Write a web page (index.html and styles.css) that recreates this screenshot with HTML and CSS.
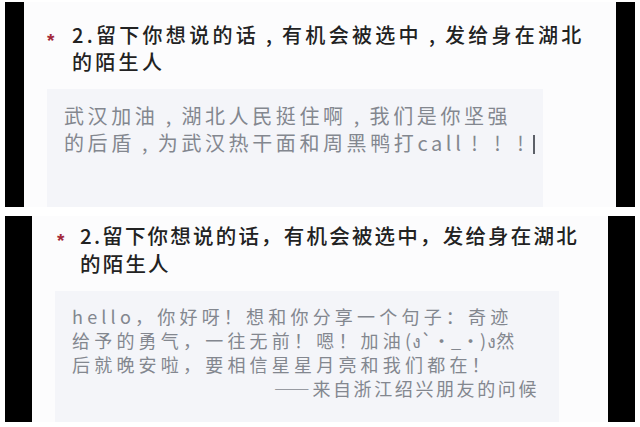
FILE: index.html
```html
<!DOCTYPE html>
<html lang="zh-CN">
<head>
<meta charset="utf-8">
<link rel="stylesheet" href="styles.css">
</head>
<body>
<div class="page">
  <section class="panel panel-top">
    <div class="bar bar-top"></div>
    <div class="content content-top">
      <div class="question q-top">
        <span class="star">*</span>
        <div class="title title-top">
          <div class="tl">2.留下你想说的话<span class="p">,</span>有机会被选中<span class="p">,</span>发给身在湖北</div>
          <div class="tl">的陌生人</div>
        </div>
      </div>
      <div class="box box-top">
        <div class="bl">武汉加油<span class="p">,</span>湖北人民挺住啊<span class="p">,</span>我们是你坚强</div>
        <div class="bl">的后盾<span class="p">,</span>为武汉热干面和周黑鸭打call<span class="p">!</span><span class="p">!</span><span class="p">!</span><span class="caret"></span></div>
      </div>
    </div>
    <div class="bar bar-top"></div>
  </section>
  <section class="panel panel-bottom">
    <div class="bar bar-bottom"></div>
    <div class="content content-bottom">
      <div class="question q-bottom">
        <span class="star">*</span>
        <div class="title title-bottom">
          <div class="tl">2.留下你想说的话，有机会被选中，发给身在湖北</div>
          <div class="tl">的陌生人</div>
        </div>
      </div>
      <div class="box box-bottom">
        <div class="bl">hello，你好呀！想和你分享一个句子：奇迹</div>
        <div class="bl">给予的勇气，一往无前！嗯！加油<span class="kao">(ง`•_•)ง</span>然</div>
        <div class="bl">后就晚安啦，要相信星星月亮和我们都在！</div>
        <div class="bl sign">——来自浙江绍兴朋友的问候</div>
      </div>
    </div>
    <div class="bar bar-bottom"></div>
  </section>
</div>
</body>
</html>
```
FILE: styles.css
```css
html, body {
  margin: 0;
  padding: 0;
  background: #ffffff;
}
body {
  width: 640px;
  height: 427px;
  overflow: hidden;
  font-family: "Noto Sans CJK SC", "Noto Sans", sans-serif;
}
.page {
  padding: 2px 5px 0 5px;
  display: flex;
  flex-direction: column;
  gap: 9px;
}
.panel {
  display: flex;
  overflow: hidden;
}
.panel-top { height: 205px; }
.panel-bottom { height: 206px; }
.bar { background: #000; flex: none; }
.bar-top { width: 19px; }
.bar-bottom { width: 27px; }
.content {
  flex: 1;
  background: #fcfcfd;
  overflow: hidden;
}
.content-top { padding: 19px 0 0 23px; }
.content-bottom { padding: 5px 0 0 25px; }

.question {
  display: flex;
  align-items: flex-start;
}
.star {
  color: #a3293a;
  font-family: "Liberation Sans", sans-serif;
  font-weight: bold;
  font-size: 19px;
  line-height: 27px;
  margin-top: 6px;
}
.q-top .star { width: 25px; }
.q-bottom .star { width: 23px; }
.title {
  color: #222222;
  font-weight: 500;
  line-height: 27px;
  white-space: nowrap;
}
.title-top { font-size: 20px; letter-spacing: 3.3px; }
.title-bottom { font-size: 20.5px; letter-spacing: 2.2px; line-height: 28px; }
.p {
  display: inline-block;
  width: 1em;
  text-align: center;
  letter-spacing: 0;
  margin-right: 0.15em;
}

.box {
  background: #f4f5f9;
  color: #83878f;
  white-space: nowrap;
}
.box-top {
  margin-top: 14px;
  width: 479px;
  height: 200px;
  padding: 13px 0 0 17px;
  font-size: 20px;
  letter-spacing: 3.6px;
  line-height: 27px;
}
.box-bottom {
  margin: 14px 0 0 -2px;
  width: 467px;
  height: 200px;
  padding: 13px 20px 0 17px;
  font-size: 18px;
  letter-spacing: 4.2px;
  line-height: 24px;
}
.kao { letter-spacing: 0.5px; }
.sign { text-align: right; letter-spacing: 2.6px; }
.caret {
  display: inline-block;
  width: 2px;
  height: 19px;
  background: #5c6068;
  vertical-align: -3px;
  margin-left: 0;
}
```
